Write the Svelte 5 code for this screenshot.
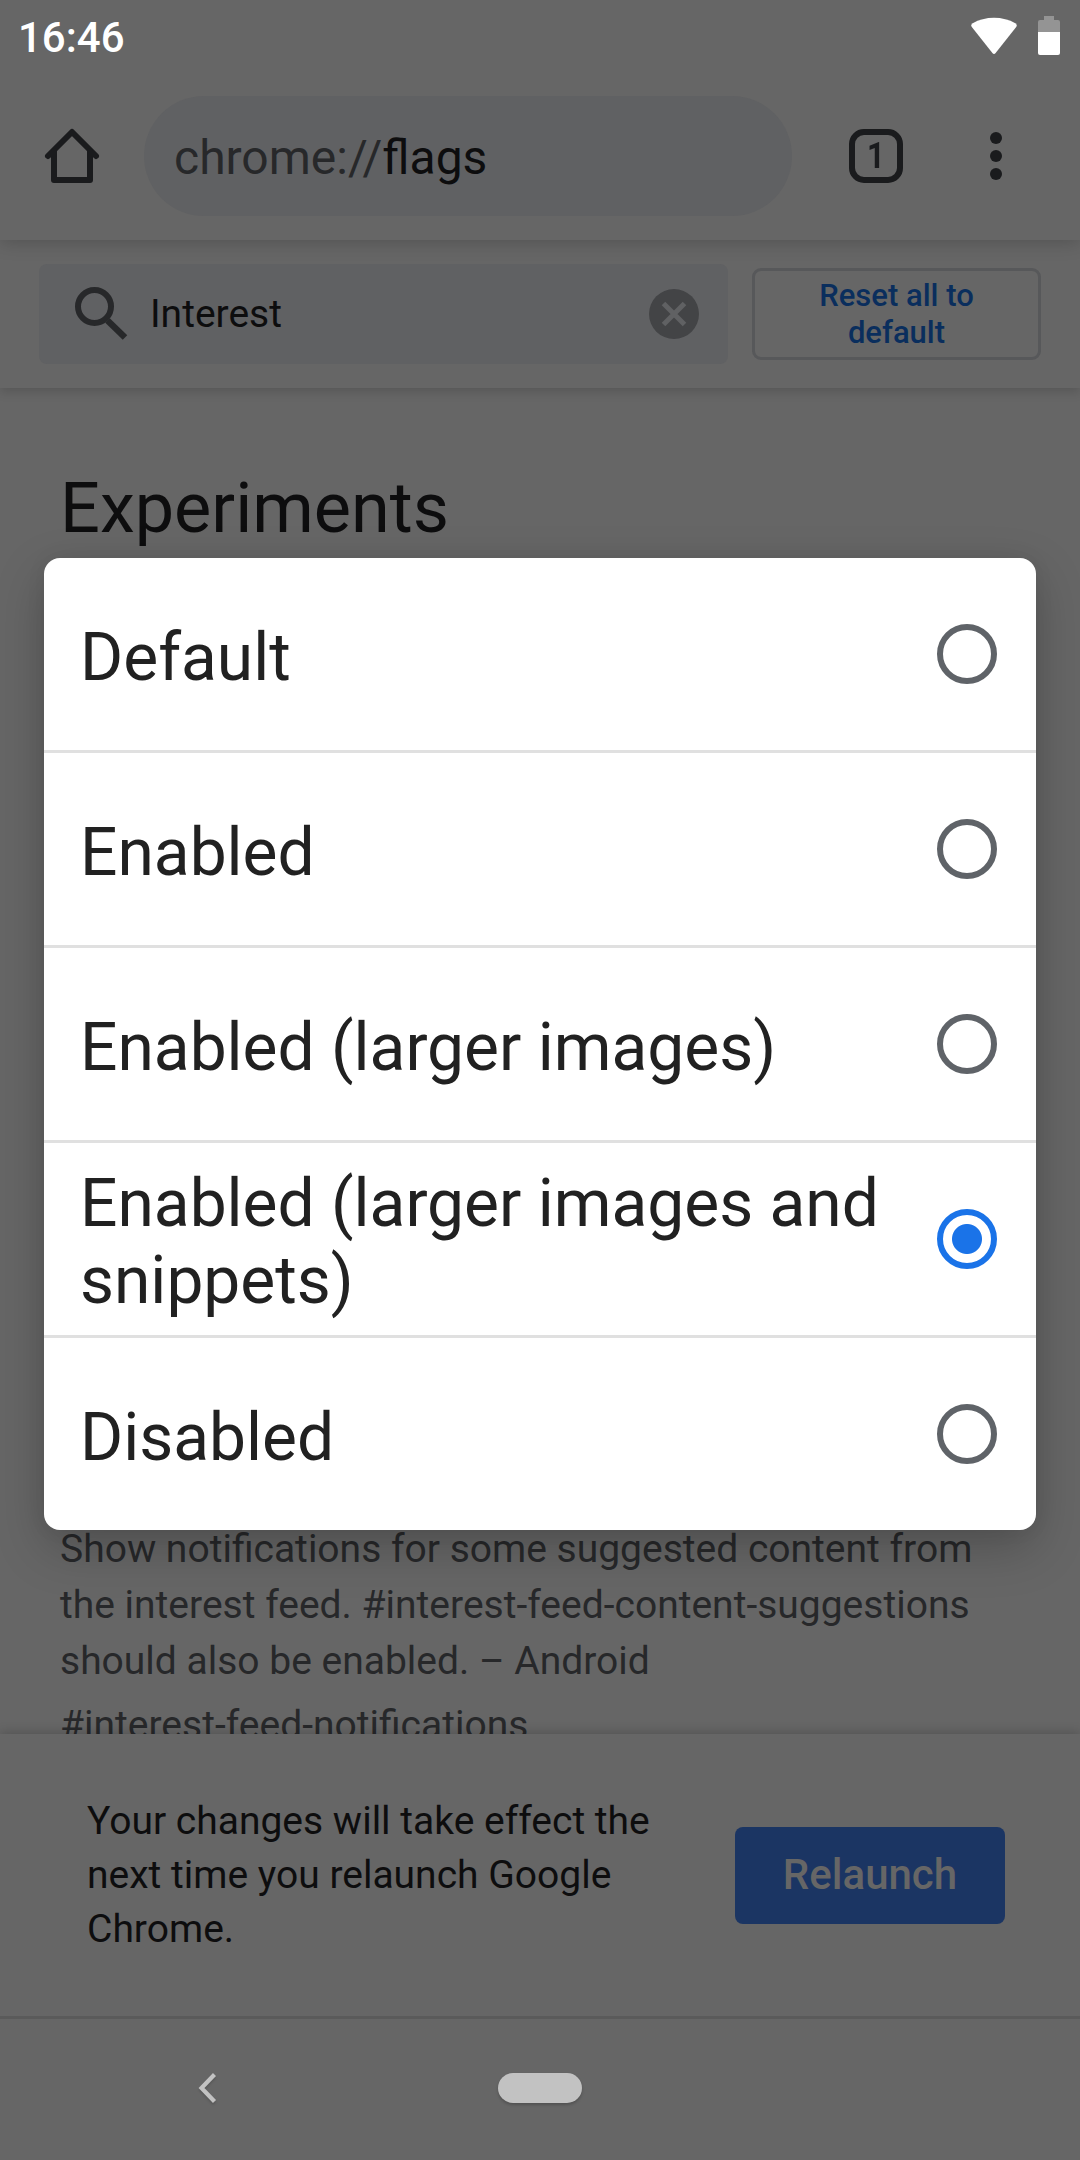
<script>
let options = [
    "Default",
    "Enabled",
    "Enabled (larger images)",
    "Enabled (larger images and snippets)",
    "Disabled",
];
let selected = 3;
let query = "Interest";
</script>

<div class="screen">
    <div class="status">
        <span class="clock">16:46</span>
        <svg class="wifi" width="46" height="38" viewBox="0 0 46 38">
            <path fill="#fff" d="M1.2 10.6C-.2 8.8 0 7.400 1.700 6.300C14-1.100 32-1.100 44.300 6.300C46 7.400 46.200 8.800 44.800 10.600L24.600 35.900Q23 37.900 21.400 35.900Z" />
        </svg>
        <svg class="battery" width="22" height="39" viewBox="0 0 22 39">
            <path fill="#949494" d="M6 0h10v4h4a2 2 0 0 1 2 2v10H0V6a2 2 0 0 1 2-2h4z" />
            <path fill="#fff" d="M0 16h22v21a2 2 0 0 1-2 2H2a2 2 0 0 1-2-2z" />
        </svg>
    </div>

    <div class="toolbar">
        <svg class="home" width="72" height="72" viewBox="0 0 24 24" fill="none" stroke="#1a1b1d" stroke-width="2" stroke-linecap="round" stroke-linejoin="round">
            <path d="M4 12 12 4l8 8" />
            <path d="M6 10.500V20h12v-9.500" />
        </svg>
        <div class="omnibox"><span class="scheme">chrome://</span>flags</div>
        <div class="tabs"><span>1</span></div>
        <svg class="dots" width="12" height="48" viewBox="0 0 12 48" fill="#1a1b1d">
            <circle cx="6" cy="6" r="6" />
            <circle cx="6" cy="24" r="6" />
            <circle cx="6" cy="42" r="6" />
        </svg>
    </div>

    <div class="header">
        <div class="search">
            <svg width="54" height="54" viewBox="0 0 54 54" fill="none" stroke="#27282a" stroke-width="6">
                <circle cx="19.500" cy="19.500" r="16.500" />
                <path stroke-width="6.500" d="M32.500 33.500 50 50.500" />
            </svg>
            <span class="query">{query}</span>
            <svg class="clear" width="50" height="50" viewBox="0 0 50 50">
                <circle cx="25" cy="25" r="25" fill="#434446" />
                <path d="M14.500 14.500l21 21m0-21l-21 21" stroke="#606163" stroke-width="5" />
            </svg>
        </div>
        <button class="reset">Reset all to<br />default</button>
    </div>

    <div class="content">
        <h1>Experiments</h1>
        <div class="flag">
            <p>Show notifications for some suggested content from<br />the interest feed. #interest-feed-content-suggestions<br />should also be enabled. – Android</p>
            <p class="permalink">#interest-feed-notifications</p>
        </div>
    </div>

    <div class="restart">
        <p>Your changes will take effect the<br />next time you relaunch Google<br />Chrome.</p>
        <button class="relaunch">Relaunch</button>
    </div>

    <div class="nav">
        <svg class="back" width="20" height="34" viewBox="0 0 20 34">
            <path d="M17.500 3.500 4.500 17l13 13.500" fill="none" stroke="#c2c2c2" stroke-width="4.200" />
        </svg>
        <div class="pill"></div>
    </div>

    <div class="dialog">
        {#each options as option, i}
            <div class="option">
                <span class="label">{option}</span>
                <span class="radio" class:checked={i === selected}></span>
            </div>
        {/each}
    </div>
</div>

<style>
:global(body) {
    margin: 0;
    background: #666;
}
.screen {
    position: relative;
    width: 1080px;
    height: 2160px;
    overflow: hidden;
    display: flex;
    flex-direction: column;
    background: #666;
    color: #0d0d0e;
    font-family: Roboto, sans-serif;
}
p, h1 {
    margin: 0;
    font-weight: 400;
}
button {
    font-family: inherit;
    font-weight: 500;
    padding: 0;
    box-sizing: border-box;
}
.status {
    position: relative;
    z-index: 3;
    height: 72px;
    flex-shrink: 0;
    display: flex;
    align-items: flex-start;
    padding: 0 20px 0 18px;
    box-sizing: border-box;
    background: #666;
}
.clock {
    flex: 1;
    color: #fff;
    font-size: 42px;
    font-weight: 500;
    line-height: 76px;
}
.wifi {
    margin-top: 17px;
}
.battery {
    margin: 16px 0 0 21px;
}
.toolbar {
    position: relative;
    z-index: 2;
    height: 168px;
    flex-shrink: 0;
    display: flex;
    align-items: center;
    padding: 0 78px 0 36px;
    box-sizing: border-box;
    background: #666;
    box-shadow: 0 2px 18px rgba(0, 0, 0, 0.2);
}
.omnibox {
    width: 648px;
    height: 120px;
    box-sizing: border-box;
    margin-left: 36px;
    padding: 3px 0 0 30px;
    border-radius: 60px;
    background: #606163;
    font-size: 48px;
    line-height: 117px;
}
.scheme {
    color: #27282a;
}
.tabs {
    width: 54px;
    height: 54px;
    box-sizing: border-box;
    margin-left: 57px;
    border: 6px solid #1a1b1d;
    border-radius: 15px;
    color: #1a1b1d;
    font-size: 36px;
    font-weight: 700;
    line-height: 43px;
    text-align: center;
}
.tabs span {
    display: block;
    transform: scaleX(0.86);
}
.dots {
    margin-left: 87px;
}
.header {
    position: relative;
    z-index: 1;
    height: 148px;
    flex-shrink: 0;
    display: flex;
    align-items: center;
    padding: 0 39px;
    background: #666;
    box-shadow: 0 4px 10px rgba(0, 0, 0, 0.15);
}
.search {
    width: 689px;
    height: 100px;
    box-sizing: border-box;
    display: flex;
    align-items: center;
    padding: 0 29px 0 36px;
    border-radius: 8px;
    background: #606163;
}
.query {
    flex: 1;
    margin-left: 21px;
    font-size: 39px;
}
.reset {
    width: 289px;
    height: 92px;
    margin-left: 24px;
    border: 3px solid #57585a;
    border-radius: 9px;
    background: none;
    color: #0a2e5d;
    font-size: 31px;
    line-height: 37px;
}
.content {
    height: 1346px;
    flex-shrink: 0;
    overflow: hidden;
    padding: 79px 60px 0;
    box-sizing: border-box;
}
h1 {
    font-size: 70.200px;
    line-height: 82px;
}
.flag {
    margin-top: 972px;
    color: #27282a;
    font-size: 39px;
    line-height: 56px;
    white-space: nowrap;
}
.permalink {
    margin-top: 8px;
}
.restart {
    position: relative;
    height: 282px;
    flex-shrink: 0;
    display: flex;
    align-items: center;
    justify-content: space-between;
    padding: 0 75px 0 87px;
    background: #666;
    box-shadow: 0 -2px 10px rgba(0, 0, 0, 0.18);
    font-size: 39px;
    line-height: 54px;
}
.relaunch {
    width: 270px;
    height: 97px;
    border: 0;
    border-radius: 8px;
    padding-bottom: 2px;
    background: #1b3563;
    color: #666;
    font-size: 42px;
}
.nav {
    position: relative;
    flex: 1;
    display: flex;
    align-items: center;
    padding: 0 0 4px 197px;
    border-top: 3px solid #5a5a5a;
    background: #666;
}
.back {
    filter: drop-shadow(0 2px 1px rgba(0, 0, 0, 0.15));
}
.pill {
    width: 84px;
    height: 30px;
    margin-left: 281px;
    border-radius: 15px;
    background: #c2c2c2;
    box-shadow: 0 2px 3px rgba(0, 0, 0, 0.2);
}
.dialog {
    position: absolute;
    z-index: 3;
    top: 558px;
    left: 44px;
    width: 992px;
    border-radius: 16px;
    background: #fff;
    box-shadow: 0 18px 50px rgba(0, 0, 0, 0.22), 0 0 20px rgba(0, 0, 0, 0.06);
}
.option {
    height: 192px;
    display: flex;
    align-items: center;
    padding: 0 39px 0 36px;
}
.option + .option {
    border-top: 3px solid #e0e0e0;
}
.label {
    flex: 1;
    padding-top: 6px;
    color: #212121;
    font-size: 65.860px;
    line-height: 77px;
}
.radio {
    width: 60px;
    height: 60px;
    flex-shrink: 0;
    box-sizing: border-box;
    border: 6px solid #5f6368;
    border-radius: 50%;
}
.checked {
    border-color: #1a73e8;
    background: radial-gradient(circle, #1a73e8 14.500px, transparent 15.500px);
}
</style>
